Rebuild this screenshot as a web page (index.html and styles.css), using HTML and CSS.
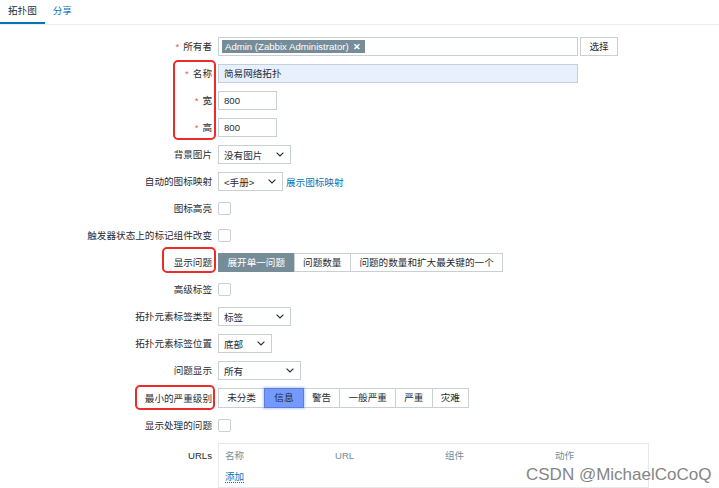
FILE: index.html
```html
<!DOCTYPE html>
<html lang="zh">
<head>
<meta charset="utf-8">
<title>拓扑图</title>
<link rel="stylesheet" href="styles.css">
</head>
<body>
<div class="page">
  <ul class="tabs">
    <li class="tab active">拓扑图</li>
    <li class="tab link">分享</li>
  </ul>

  <div class="form">
    <div class="lbl"><span class="req">*</span>所有者</div>
    <div class="fld">
      <div class="multi"><span class="tag">Admin (Zabbix Administrator) <b class="x">✕</b></span></div>
      <div class="btn">选择</div>
    </div>

    <div class="lbl"><span class="req">*</span>名称</div>
    <div class="fld"><div class="input name">简易网络拓扑</div></div>

    <div class="lbl"><span class="req">*</span>宽</div>
    <div class="fld"><div class="input small">800</div></div>

    <div class="lbl"><span class="req">*</span>高</div>
    <div class="fld"><div class="input small">800</div></div>

    <div class="lbl">背景图片</div>
    <div class="fld"><div class="select w73"><span>没有图片</span><svg class="chev" width="8" height="5" viewBox="0 0 8 5"><path d="M.6.6 4 4 7.4.6" fill="none" stroke="#1f2c33" stroke-width="1.1"/></svg></div></div>

    <div class="lbl">自动的图标映射</div>
    <div class="fld"><div class="select w65"><span>&lt;手册&gt;</span><svg class="chev" width="8" height="5" viewBox="0 0 8 5"><path d="M.6.6 4 4 7.4.6" fill="none" stroke="#1f2c33" stroke-width="1.1"/></svg></div><span class="link-text">展示图标映射</span></div>

    <div class="lbl">图标高亮</div>
    <div class="fld"><div class="cb"></div></div>

    <div class="lbl">触发器状态上的标记组件改变</div>
    <div class="fld"><div class="cb"></div></div>

    <div class="lbl">显示问题</div>
    <div class="fld">
      <div class="seg">
        <span class="opt on">展开单一问题</span><span class="opt">问题数量</span><span class="opt">问题的数量和扩大最关键的一个</span>
      </div>
    </div>

    <div class="lbl">高级标签</div>
    <div class="fld"><div class="cb"></div></div>

    <div class="lbl">拓扑元素标签类型</div>
    <div class="fld"><div class="select w73"><span>标签</span><svg class="chev" width="8" height="5" viewBox="0 0 8 5"><path d="M.6.6 4 4 7.4.6" fill="none" stroke="#1f2c33" stroke-width="1.1"/></svg></div></div>

    <div class="lbl">拓扑元素标签位置</div>
    <div class="fld"><div class="select w54"><span>底部</span><svg class="chev" width="8" height="5" viewBox="0 0 8 5"><path d="M.6.6 4 4 7.4.6" fill="none" stroke="#1f2c33" stroke-width="1.1"/></svg></div></div>

    <div class="lbl">问题显示</div>
    <div class="fld"><div class="select w83"><span>所有</span><svg class="chev" width="8" height="5" viewBox="0 0 8 5"><path d="M.6.6 4 4 7.4.6" fill="none" stroke="#1f2c33" stroke-width="1.1"/></svg></div></div>

    <div class="lbl">最小的严重级别</div>
    <div class="fld">
      <div class="seg sev">
        <span class="opt">未分类</span><span class="opt info">信息</span><span class="opt">警告</span><span class="opt">一般严重</span><span class="opt">严重</span><span class="opt">灾难</span>
      </div>
    </div>

    <div class="lbl">显示处理的问题</div>
    <div class="fld"><div class="cb"></div></div>

    <div class="lbl top">URLs</div>
    <div class="fld top">
      <div class="urls">
        <div class="urow head"><span>名称</span><span>URL</span><span>组件</span><span>动作</span></div>
        <div class="urow"><span class="add">添加</span></div>
      </div>
    </div>
  </div>

  <div class="mark m1"></div>
  <div class="mark m2"></div>
  <div class="mark m3"></div>
  <div class="watermark">CSDN @MichaelCoCoQ</div>
</div>
</body>
</html>
```

FILE: styles.css
```css
html, body {
  margin: 0;
  padding: 0;
  background: #ffffff;
}

body {
  font-family: "Liberation Sans", "Noto Sans CJK SC", sans-serif;
  font-size: 9.6px;
  color: #1f2c33;
}

.page {
  position: relative;
  width: 719px;
  height: 488px;
  overflow: hidden;
}

.tabs {
  display: flex;
  margin: 0;
  padding: 0;
  list-style: none;
  height: 24px;
  border-bottom: 1px solid #ebeef0;
}

.tab {
  padding: 0 8px;
  line-height: 22px;
  height: 22px;
  border-bottom: 2px solid transparent;
}

.tab.active {
  border-bottom-color: #0275b8;
}

.tab.link {
  color: #0275b8;
}

.form {
  display: grid;
  grid-template-columns: 212px 1fr;
  column-gap: 6px;
  row-gap: 8px;
  margin-top: 12px;
  align-items: center;
}

.lbl {
  text-align: right;
  line-height: 19px;
  height: 19px;
  white-space: nowrap;
}

.req {
  color: #e45959;
  margin-right: 4px;
}

.fld {
  display: flex;
  align-items: center;
  min-height: 19px;
}

.multi {
  box-sizing: border-box;
  width: 360px;
  height: 19px;
  border: 1px solid #c8d0d4;
  background: #fff;
  display: flex;
  align-items: center;
  padding-left: 3px;
}

.tag {
  background: #768d99;
  color: #fff;
  line-height: 13px;
  height: 13px;
  padding: 0 4px 0 3px;
  white-space: nowrap;
}

.tag .x {
  font-size: 9px;
  margin-left: 2px;
}

.btn {
  box-sizing: border-box;
  margin-left: 2px;
  width: 38px;
  height: 19px;
  line-height: 17px;
  text-align: center;
  border: 1px solid #c8d0d4;
  background: #fff;
}

.input {
  box-sizing: border-box;
  height: 19px;
  line-height: 17px;
  border: 1px solid #c8d0d4;
  padding: 0 5px;
  background: #fff;
}

.input.name {
  width: 360px;
  background: #e8f0fe;
  border-color: #c4cfd8;
}

.input.small {
  width: 59px;
}

.select {
  box-sizing: border-box;
  height: 19px;
  border: 1px solid #c8d0d4;
  background: #fff;
  display: flex;
  align-items: center;
  justify-content: space-between;
  padding: 0 6px 0 5px;
}

.w73 { width: 73px; }
.w65 { width: 65px; }
.w54 { width: 54px; }
.w83 { width: 83px; }

.chev {
  display: block;
  flex: none;
}

.link-text {
  color: #0275b8;
  margin-left: 3px;
}

.cb {
  box-sizing: border-box;
  width: 13px;
  height: 13px;
  border: 1px solid #c8d0d4;
  border-radius: 2px;
  background: #fff;
}

.seg {
  display: flex;
  height: 19px;
}

.opt {
  box-sizing: border-box;
  height: 19px;
  line-height: 17px;
  padding: 0 8.5px;
  border: 1px solid #c8d0d4;
  margin-left: -1px;
  background: #fff;
  white-space: nowrap;
}

.opt:first-child {
  margin-left: 0;
}

.opt.on {
  background: #768d99;
  border-color: #768d99;
  color: #fff;
}

.sev {
  height: 20px;
}

.sev .opt {
  height: 20px;
  line-height: 18px;
  padding: 0 8.2px;
}

.sev .opt.info {
  position: relative;
  z-index: 1;
  padding: 0 9.2px;
  background: #7499ff;
  border-color: #5a7fd6;
  box-shadow: 0 0 2px 1px rgba(116, 153, 255, 0.45);
}

.lbl.top {
  align-self: start;
  line-height: 12px;
  height: auto;
  padding-top: 7px;
}

.fld.top {
  align-self: start;
}

.urls {
  box-sizing: border-box;
  width: 431px;
  height: 45px;
  border: 1px solid #e6eaec;
  padding: 6px 6px 0;
  display: flex;
  flex-direction: column;
  gap: 9px;
}

.urow {
  display: grid;
  grid-template-columns: 110px 110px 110px 1fr;
  line-height: 12px;
}

.urow.head {
  color: #768d99;
}

.add {
  color: #0275b8;
  border-bottom: 1px dotted #0275b8;
  justify-self: start;
  line-height: 11px;
}

.mark {
  position: absolute;
  box-sizing: border-box;
  border: 2px solid #ec2b2b;
  border-radius: 5px;
}

.m1 { left: 173px; top: 60px; width: 43px; height: 80px; }
.m2 { left: 162px; top: 247px; width: 54px; height: 26px; }
.m3 { left: 135px; top: 385px; width: 80px; height: 25px; }

.watermark {
  position: absolute;
  left: 526px;
  top: 465px;
  font-family: "Liberation Sans", sans-serif;
  font-size: 17px;
  color: #858585;
  white-space: nowrap;
}
```
